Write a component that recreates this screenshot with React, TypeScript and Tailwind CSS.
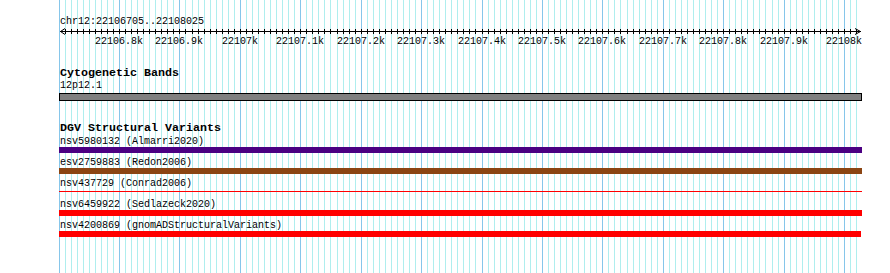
const START = 22106700;
const END = 22108020;
const toX = (bp: number) => 119 + (bp - 22106800) * 0.604167;

const gridLines: { x: number; major: boolean }[] = [];
for (let bp = START; bp <= END; bp += 10) {
  gridLines.push({ x: Math.round(toX(bp)) + 0.5, major: bp % 100 === 0 });
}

const rulerLabels: { x: number; text: string }[] = [];
for (let bp = 22106800; bp <= 22108000; bp += 100) {
  const k = bp / 1000;
  const text = (Number.isInteger(k) ? k.toString() : k.toFixed(1)) + 'k';
  rulerLabels.push({ x: Math.round(toX(bp)) - 59, text });
}

const variants = [
  { label: 'nsv5980132 (Almarri2020)', color: 'bg-[#4b0082]', thin: false },
  { label: 'esv2759883 (Redon2006)', color: 'bg-[#8b4513]', thin: false },
  { label: 'nsv437729 (Conrad2006)', color: 'bg-[#ff0000]', thin: true },
  { label: 'nsv6459922 (Sedlazeck2020)', color: 'bg-[#ff0000]', thin: false },
  { label: 'nsv4200869 (gnomADStructuralVariants)', color: 'bg-[#ff0000]', thin: false },
];

function Grid() {
  return (
    <svg className="absolute inset-0" width={890} height={273} shapeRendering="crispEdges">
      {gridLines.map((l, i) => (
        <line
          key={i}
          x1={l.x}
          x2={l.x}
          y1={0}
          y2={273}
          stroke={l.major ? '#86c6ea' : '#afeeee'}
          strokeWidth={1}
        />
      ))}
    </svg>
  );
}

function Ruler() {
  const ticks = gridLines.filter((l) => l.x > 62 && l.x < 858);
  return (
    <svg width={803} height={20} className="block overflow-visible">
      <g shapeRendering="crispEdges" stroke="#000" strokeWidth={1}>
        <line x1={1} x2={802} y1={4.5} y2={4.5} />
        {ticks.map((t, i) => (
          <line key={i} x1={t.x - 59} x2={t.x - 59} y1={2} y2={7} />
        ))}
      </g>
      <polyline points="6,1.5 1.5,4.5 6,7.5" fill="none" stroke="#000" strokeWidth={1} />
      <polyline points="796,1.5 801.5,4.5 796,7.5" fill="none" stroke="#000" strokeWidth={1} />
      {rulerLabels.map((l) => (
        <text
          key={l.text}
          x={l.x}
          y={17}
          fontSize={10}
          textAnchor="middle"
          fontFamily="'Liberation Mono', monospace"
          fill="#000"
        >
          {l.text}
        </text>
      ))}
    </svg>
  );
}

export default function App() {
  return (
    <div className="relative w-[890px] h-[273px] overflow-hidden bg-white text-black [font-family:'Liberation_Mono',monospace]">
      <Grid />
      <div className="relative ml-[59px] w-[803px] pt-[16px] flex flex-col">
        {/* Overview */}
        <div className="h-[11px] pl-[1px] text-[10px] leading-[12px] whitespace-pre">chr12:22106705..22108025</div>
        <Ruler />

        {/* Cytogenetic Bands */}
        <div className="mt-[20px] h-[13px] pl-[1px] text-[11.67px] leading-[13px] font-bold whitespace-pre">Cytogenetic Bands</div>
        <div className="h-[12px] pl-[1px] text-[10px] leading-[12px]">12p12.1</div>
        <div className="mt-[1px] h-[8px] w-[803px] border border-black bg-[#808080]" />

        {/* DGV Structural Variants */}
        <div className="mt-[21px] h-[13px] pl-[1px] text-[11.67px] leading-[13px] font-bold whitespace-pre">DGV Structural Variants</div>
        <div className="mt-[1px] flex flex-col">
          {variants.map((v, i) => (
            <div key={v.label} className="flex flex-col h-[21px]">
              <div className="h-[11px] pl-[1px] text-[10px] leading-[12px] whitespace-pre">{v.label}</div>
              {v.thin ? (
                <div className="h-[6px] pt-[2px]">
                  <div className={`h-[1px] w-[803px] ${v.color}`} />
                </div>
              ) : (
                <div className={`h-[6px] ${i === variants.length - 1 ? 'w-[802px]' : 'w-[803px]'} ${v.color}`} />
              )}
            </div>
          ))}
        </div>
      </div>
    </div>
  );
}
